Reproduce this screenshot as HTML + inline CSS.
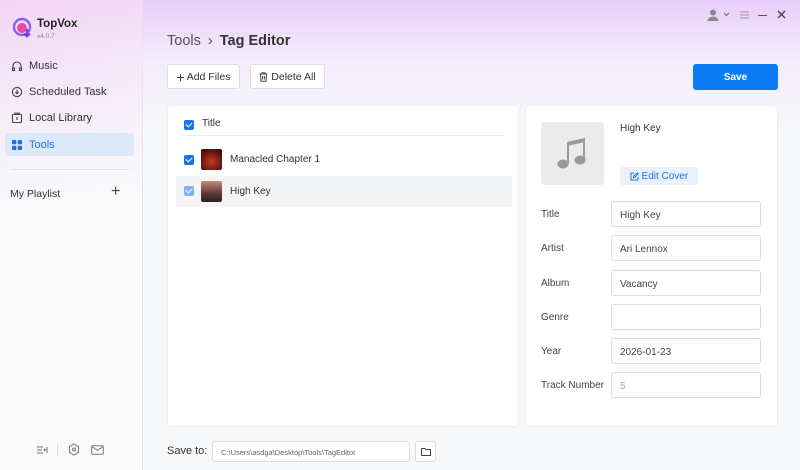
<!DOCTYPE html>
<html><head><meta charset="utf-8"><style>
*{box-sizing:border-box;margin:0;padding:0}
body{width:800px;height:470px;overflow:hidden;font-family:"Liberation Sans",sans-serif;background:#f7f8fa;position:relative;color:#333}
.bg{position:absolute;inset:0;background:linear-gradient(180deg,rgba(230,200,250,.9) 0%,rgba(240,225,252,.5) 60px,rgba(247,248,250,0) 130px)}
.sidebar{position:absolute;left:0;top:0;width:143px;height:470px;border-right:1px solid #e6e6ea;background:linear-gradient(170deg,#f3d5f5 0%,#f6eefb 25%,#fafafb 45%,#fafafb 100%)}
.abs{position:absolute}
.nav{position:absolute;left:5px;width:129px;height:23px;font-size:11px;color:#333;display:flex;align-items:center;padding-left:6px;border-radius:4px}
.nav svg{margin-right:6px}
.btn{position:absolute;height:25px;border:1px solid #dcdde0;border-radius:3px;background:#fff;font-size:10.5px;display:flex;align-items:center;justify-content:center;color:#333}
.panel{position:absolute;background:#fff;border:1px solid #eceef1;border-radius:4px}
.cb{position:absolute;width:10px;height:10px;background:#1a73e8;border-radius:2px;display:block}
.cb:after{content:"";position:absolute;left:3px;top:1px;width:3px;height:5px;border:solid #fff;border-width:0 1.5px 1.5px 0;transform:rotate(45deg)}
.cb.light{background:#7fb2f0}
.lbl{position:absolute;left:541px;font-size:10px;color:#444}
.inp{position:absolute;left:611px;width:150px;height:26px;border:1px solid #dcdde0;border-radius:3px;font-size:10px;color:#444;padding:8px 8px}
</style></head><body>
<div class="bg"></div>
<div class="sidebar">
  <svg class="abs" style="left:12px;top:17px" width="22" height="22" viewBox="0 0 22 22"><circle cx="10" cy="10" r="8" fill="none" stroke="#8b5cf6" stroke-width="2.4"/><circle cx="10" cy="11" r="5" fill="#e84aa0"/><path d="M15 12v7M12 16.5l3 3 3-3" stroke="#7c3aed" stroke-width="2" fill="none"/></svg>
  <div class="abs" style="left:37px;top:18px;font-size:11.5px;font-weight:bold;color:#222">TopVox</div>
  <div class="abs" style="left:37px;top:33px;font-size:6.5px;color:#888">v4.0.7</div>
  <div class="nav" style="top:54px"><svg width="12" height="12" viewBox="0 0 12 12" fill="none" stroke="#444" stroke-width="1.1"><path d="M2 9V6a4 4 0 018 0v3M1.5 8h2v2.5h-2zM8.5 8h2v2.5h-2z"/></svg>Music</div>
  <div class="nav" style="top:80px"><svg width="12" height="12" viewBox="0 0 12 12" fill="none" stroke="#444" stroke-width="1.1"><circle cx="6" cy="6" r="4.6"/><path d="M6 3.5v4M4.3 6l1.7 1.7L7.7 6"/></svg>Scheduled Task</div>
  <div class="nav" style="top:106px"><svg width="12" height="12" viewBox="0 0 12 12" fill="none" stroke="#444" stroke-width="1.1"><rect x="1.5" y="2.5" width="9" height="8" rx="1"/><path d="M3 1.2h6M6 5v3"/></svg>Local Library</div>
  <div class="nav" style="top:133px;background:#dde9f8;color:#1a73e8"><svg width="12" height="12" viewBox="0 0 12 12" fill="#1a73e8"><rect x="1" y="1" width="4.3" height="4.3" rx=".8"/><rect x="6.7" y="1" width="4.3" height="4.3" rx=".8"/><rect x="1" y="6.7" width="4.3" height="4.3" rx=".8"/><rect x="6.7" y="6.7" width="4.3" height="4.3" rx=".8"/></svg>Tools</div>
  <div class="abs" style="left:10px;top:169px;width:119px;height:1px;background:#e4e4e8"></div>
  <div class="abs" style="left:10px;top:188px;font-size:10.5px;color:#333">My Playlist</div>
  <div class="abs" style="left:111px;top:183px;font-size:16px;color:#444">+</div>
  <svg class="abs" style="left:36px;top:445px" width="12" height="10" viewBox="0 0 12 10" fill="none" stroke="#777" stroke-width="1"><path d="M1 2h6M1 5h5M1 8h6M11 2v6M10 5l-2 0M9 3.8L8 5l1 1.2"/></svg>
  <div class="abs" style="left:57px;top:444px;width:1px;height:12px;background:#ddd"></div>
  <svg class="abs" style="left:68px;top:443px" width="12" height="13" viewBox="0 0 12 13" fill="none" stroke="#777" stroke-width="1"><path d="M6 1l4.5 2.6v5.8L6 12 1.5 9.4V3.6z"/><circle cx="6" cy="6.5" r="1.5"/></svg>
  <svg class="abs" style="left:91px;top:445px" width="13" height="10" viewBox="0 0 13 10" fill="none" stroke="#777" stroke-width="1"><rect x=".7" y=".7" width="11.6" height="8.6" rx="1"/><path d="M1 1.5l5.5 4 5.5-4"/></svg>
</div>
<svg class="abs" style="left:706px;top:8px" width="14" height="14" viewBox="0 0 14 14" fill="#888"><circle cx="7" cy="4.5" r="3"/><path d="M1.5 13a5.5 4.5 0 0111 0z"/></svg>
<svg class="abs" style="left:723px;top:12px" width="7" height="5" viewBox="0 0 7 5" fill="none" stroke="#777" stroke-width="1.2"><path d="M1 1l2.5 2.5L6 1"/></svg>
<svg class="abs" style="left:740px;top:11px" width="9" height="8" viewBox="0 0 9 8" stroke="#999" stroke-width="1"><path d="M0 1h9M0 4h9M0 7h9"/></svg>
<div class="abs" style="left:758px;top:14.5px;width:9px;height:1.6px;background:#555"></div>
<svg class="abs" style="left:777px;top:10px" width="9" height="9" viewBox="0 0 9 9" stroke="#444" stroke-width="1.4"><path d="M1 1l7 7M8 1l-7 7"/></svg>

<div class="abs" style="left:167px;top:33px;font-size:14.5px;color:#555">Tools <span style="margin:0 3px;color:#444">&#8250;</span> <b style="color:#333">Tag Editor</b></div>
<div class="btn" style="left:167px;top:64px;width:73px"><span style="font-size:14px;margin-right:2px">+</span>Add Files</div>
<div class="btn" style="left:250px;top:64px;width:75px"><svg width="9" height="10" viewBox="0 0 9 10" fill="none" stroke="#444" stroke-width="1"><path d="M.5 2h8M3 2V.7h3V2M1.5 2l.5 7.3h5L7.5 2M3.6 4v3.5M5.4 4v3.5"/></svg>&nbsp;Delete All</div>
<div class="abs" style="left:693px;top:64px;width:85px;height:26px;background:#0b7cf5;border-radius:3px;color:#fff;font-size:10px;font-weight:bold;display:flex;align-items:center;justify-content:center">Save</div>

<div class="panel" style="left:167px;top:105px;width:352px;height:322px">
  <span class="cb" style="left:16px;top:14px"></span>
  <div class="abs" style="left:34px;top:12px;font-size:10px">Title</div>
  <div class="abs" style="left:14px;top:29px;width:323px;height:1px;background:#ececec"></div>
  <div class="abs" style="left:8px;top:70px;width:336px;height:31px;background:#f4f5f7"></div>
  <span class="cb" style="left:16px;top:49px"></span>
  <div class="abs" style="left:33px;top:43px;width:21px;height:21px;background:radial-gradient(circle at 50% 60%,#c2401e,#5a1010 70%,#2a0808);border-radius:2px"></div>
  <div class="abs" style="left:62px;top:48px;font-size:10px">Manacled Chapter 1</div>
  <span class="cb light" style="left:16px;top:80px"></span>
  <div class="abs" style="left:33px;top:75px;width:21px;height:21px;background:linear-gradient(180deg,#c88a78,#5a3a38 60%,#2a2020);border-radius:2px"></div>
  <div class="abs" style="left:62px;top:80px;font-size:10px">High Key</div>
</div>

<div class="panel" style="left:525px;top:105px;width:253px;height:322px"></div>
<div class="abs" style="left:541px;top:122px;width:63px;height:63px;background:#ebebeb;border-radius:4px"></div>
<svg class="abs" style="left:557px;top:136px" width="32" height="34" viewBox="0 0 32 34" fill="#999"><path d="M10 6l18-4v22h-2V6.5L12 9.5V28h-2z"/><ellipse cx="6" cy="28" rx="5.5" ry="4.5"/><ellipse cx="23" cy="24" rx="5.5" ry="4.5"/></svg>
<div class="abs" style="left:620px;top:123px;font-size:10px;color:#333">High Key</div>
<div class="abs" style="left:620px;top:167px;width:78px;height:18px;background:#e8f1fc;border-radius:3px;font-size:10px;color:#1a73e8;display:flex;align-items:center;justify-content:center"><svg width="9" height="9" viewBox="0 0 9 9" fill="none" stroke="#1a73e8" stroke-width="1"><path d="M4 1H1v7h7V5M3.5 5.5l.3-1.5L7.5.8l.8.8L5 5.2z"/></svg>&nbsp;Edit Cover</div>

<div class="lbl" style="top:209px">Title</div><div class="inp" style="top:201px">High Key</div>
<div class="lbl" style="top:243px">Artist</div><div class="inp" style="top:235px">Ari Lennox</div>
<div class="lbl" style="top:278px">Album</div><div class="inp" style="top:270px">Vacancy</div>
<div class="lbl" style="top:312px">Genre</div><div class="inp" style="top:304px"></div>
<div class="lbl" style="top:346px">Year</div><div class="inp" style="top:338px">2026-01-23</div>
<div class="lbl" style="top:380px">Track Number</div><div class="inp" style="top:372px;color:#aaa">5</div>

<div class="abs" style="left:167px;top:445px;font-size:11px;color:#333">Save to:</div>
<div class="abs" style="left:212px;top:441px;width:198px;height:21px;border:1px solid #dcdde0;border-radius:3px;background:#fff;font-size:7.5px;color:#666;padding:6px 8px">C:\Users\asdga\Desktop\Tools\TagEditor</div>
<div class="abs" style="left:415px;top:441px;width:21px;height:21px;border:1px solid #dcdde0;border-radius:3px;background:#fff"><svg style="position:absolute;left:5px;top:6px" width="10" height="8" viewBox="0 0 10 8" fill="none" stroke="#444" stroke-width="1"><path d="M.5.5h3.5l1 1h4.5v6h-9z"/></svg></div>
</body></html>
